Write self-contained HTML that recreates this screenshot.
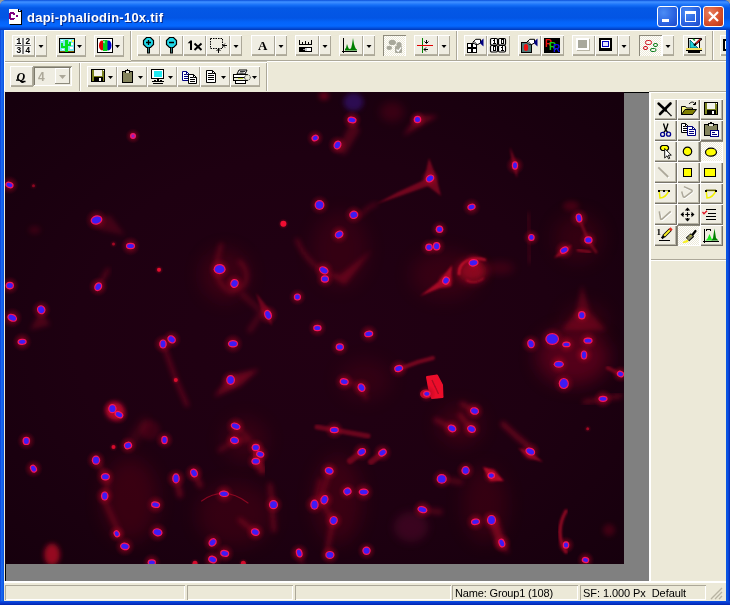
<!DOCTYPE html>
<html><head><meta charset="utf-8">
<style>
*{box-sizing:border-box;margin:0;padding:0}
html,body{width:730px;height:605px;overflow:hidden;background:#ECE9D8;font-family:"Liberation Sans",sans-serif;font-size:11px;color:#000}
.a{position:absolute}
#frame{will-change:transform}
#frame{left:0;top:0;width:730px;height:605px;background:linear-gradient(to right,#0A3AD6 0,#1560EA 1px,#1E70F2 2px,#0A55E2 3px,#0A55E2 4px,#0A55E2 726px,#0A55E2 727px,#0C4FE0 728px,#0838CC 729px,#0428B0 730px);border-radius:6px 6px 0 0;overflow:hidden}
#corners{left:0;top:0;width:730px;height:10px;background:linear-gradient(#9a9a88,#8aa0e0 5px)}
#title{left:0;top:0;width:730px;height:30px;border-radius:6px 6px 0 0;
 background:linear-gradient(#0040D0 0,#2F7FF8 1px,#3A8BFF 2.5px,#1670F8 5px,#0458E6 8px,#0355E4 18px,#0464FA 22px,#0568FF 26px,#0450DC 28px,#0038B8 30px)}
#ttext{left:27px;top:9.5px;color:#fff;font-weight:bold;font-size:13px;line-height:16px;white-space:nowrap;letter-spacing:.25px;text-shadow:1px 1px 0 #0A2A8A}
#client{left:4px;top:30px;width:722px;height:571px;background:#ECE9D8;overflow:hidden}
.cb{top:6px;width:21px;height:21px;border:1px solid #fff;border-radius:3px;background:radial-gradient(circle at 30% 30%,#4B8CF5 0,#2A62E0 60%,#1C49C8 100%)}
#bclose{background:radial-gradient(circle at 30% 30%,#E8805F 0,#D7502C 55%,#B83414 100%)}
.btn{position:absolute;height:22px;background:#EFEDE2;box-shadow:inset 1px 1px 0 #fff,inset -1px -1px 0 #ACA899,inset 0 -2px 0 #B5B1A0}
.btn svg,.tb svg{position:absolute;left:0;top:0}
.dd:after{content:"";position:absolute;right:3px;top:9px;border:3.5px solid transparent;border-top:4px solid #000;border-bottom:0}
.sunk{box-shadow:inset 1px 1px 0 #8d8a7c,inset -1px -1px 0 #fff;background:#F6F5EE}
.vsep{position:absolute;width:2px;border-left:1px solid #ACA899;border-right:1px solid #fff}
.hsep{position:absolute;height:2px;border-top:1px solid #ACA899;border-bottom:1px solid #fff}
.tb{position:absolute;width:23px;height:21px;background:#EFEDE2;box-shadow:inset 1px 1px 0 #fff,inset -1px -1px 0 #77746A,inset -2px -2px 0 #B8B5A5}
.tb.p{background:#F8F7F1;box-shadow:inset 1px 1px 0 #8d8a7c,inset -1px -1px 0 #fff}
#s1{letter-spacing:-.16px}#s2{letter-spacing:-.07px}
.sp{position:absolute;top:555px;height:15px;box-shadow:inset 1px 1px 0 #ACA899,inset -1px -1px 0 #fff;font-size:11px;line-height:17px;padding-left:3px;white-space:nowrap;overflow:hidden}
</style></head><body>
<svg width="0" height="0" style="position:absolute"><defs><pattern id="dith" width="2" height="2" patternUnits="userSpaceOnUse"><rect width="2" height="2" fill="#fff"/><rect width="1" height="1" fill="#ECE9D8"/><rect x="1" y="1" width="1" height="1" fill="#ECE9D8"/></pattern></defs></svg>
<div class="a" id="corners"></div>
<div class="a" id="frame">
<div class="a" id="title"></div>
<svg class="a" style="left:8px;top:9px" width="16" height="16"><g shape-rendering="crispEdges"><rect x="2" y="1" width="12" height="15" fill="#000"/><rect x="1" y="0" width="12" height="15" fill="#fff"/>
<path d="M10 0h3v3h-3z" fill="#000"/><rect x="11" y="1" width="1" height="1" fill="#fff"/><path d="M10 0L13 3V0z" fill="#0054E3"/>
<g transform="translate(-1 -1)"><path d="M3 4h4v1h1v1H6V5.8H4V6H3v4h1v.5h2V10h2v1H7v1H3v-1H2V5h1z" fill="#800080"/><rect x="2" y="5" width="2" height="6" fill="#800080"/><rect x="3" y="4" width="4" height="2" fill="#800080"/><rect x="3" y="10" width="4" height="2" fill="#800080"/><rect x="6" y="5" width="2" height="1.5" fill="#800080"/><rect x="6" y="9.5" width="2" height="1.5" fill="#800080"/>
<rect x="9" y="7" width="2" height="2" fill="#800080"/></g></g></svg>
<div class="a" id="ttext">dapi-phaliodin-10x.tif</div>
<div class="a cb" style="left:657px"><svg width="19" height="19"><rect x="4" y="12" width="7" height="3" fill="#fff"/></svg></div>
<div class="a cb" style="left:680px"><svg width="19" height="19"><rect x="4.5" y="5.5" width="10" height="9" fill="none" stroke="#fff"/><rect x="4" y="4" width="11" height="3" fill="#fff"/></svg></div>
<div class="a cb" id="bclose" style="left:703px"><svg width="19" height="19"><path d="M5 5L14 14M14 5L5 14" stroke="#fff" stroke-width="2.2"/></svg></div>
<div class="a" style="left:0;top:601px;width:730px;height:4px;background:linear-gradient(#0A50E0,#0838D0 50%,#0224A8)"></div>
<div class="a" id="client"></div><div class="a" id="content" style="left:0;top:0;width:726px;height:601px;overflow:hidden">


<div class="a" style="left:4px;top:30px;width:722px;height:1px;background:#fff"></div>
<div class="a" style="left:4px;top:61px;width:127px;height:1px;background:#ACA899"></div>
<div class="a" style="left:4px;top:62px;width:263px;height:1px;background:#fff"></div>
<div class="a" style="left:131px;top:60px;width:595px;height:1px;background:#ACA899"></div>
<div class="a" style="left:131px;top:61px;width:136px;height:1px;background:#C8C5B5"></div>
<div class="a" style="left:267px;top:61px;width:459px;height:1px;background:#fff"></div>
<div class="a" style="left:4px;top:30px;width:1px;height:61px;background:#fff"></div>
<div class="btn" style="left:12px;top:35px;width:23px;height:22px"><svg width="23" height="22"><g shape-rendering="crispEdges"><rect x="3" y="3" width="16" height="16" fill="#fff" opacity=".7"/><rect x="10" y="3" width="2" height="16" fill="#808080"/><rect x="3" y="10" width="16" height="1" fill="#808080"/></g>
<g font-family="Liberation Mono" font-weight="bold" font-size="8.5" fill="#000"><text x="4.2" y="9.3">1</text><text x="13.2" y="9.3">2</text><text x="4.2" y="18.3">3</text><text x="13.2" y="18.3">4</text></g></svg></div>
<div class="btn" style="left:35px;top:35px;width:12px;height:22px"><svg width="12" height="22"><path d="M3.5 10h5l-2.5 3z" fill="#000"/></svg></div>
<div class="btn" style="left:56px;top:35px;width:30px;height:22px"><svg width="30" height="22"><g shape-rendering="crispEdges"><rect x="3" y="3" width="16" height="15" fill="#000"/><rect x="4" y="4" width="14" height="12" fill="#80E8F0"/>
<rect x="4" y="16" width="14" height="1" fill="#806000"/>
<rect x="9" y="5" width="3" height="12" fill="#00E020"/><rect x="5" y="8" width="2" height="5" fill="#00E020"/><rect x="5" y="11" width="5" height="2" fill="#00E020"/><rect x="13" y="7" width="2" height="4" fill="#00E020"/><rect x="11" y="9" width="4" height="2" fill="#00E020"/>
<rect x="16" y="5" width="2" height="2" fill="#FFFF40"/><rect x="13" y="5" width="2" height="1" fill="#fff"/><rect x="15" y="8" width="2" height="2" fill="#fff"/><rect x="5" y="5" width="2" height="1" fill="#fff"/><rect x="14" y="12" width="3" height="2" fill="#fff"/><rect x="6" y="14" width="2" height="1" fill="#fff"/></g>
<path d="M21 10h5l-2.5 3z" fill="#000"/></svg></div>
<div class="btn" style="left:94px;top:35px;width:30px;height:22px"><svg width="30" height="22"><g shape-rendering="crispEdges"><rect x="3" y="3" width="16" height="15" fill="#000"/><rect x="4" y="4" width="14" height="13" fill="#fff"/></g>
<ellipse cx="8" cy="10.5" rx="3" ry="5" fill="#E00000"/><ellipse cx="14.5" cy="10.5" rx="3" ry="5" fill="#0000D0"/><rect x="9" y="5" width="4.5" height="11" fill="#00D020"/><path d="M9 7l1.5-1.5v3z" fill="#fff"/>
<path d="M21 10h5l-2.5 3z" fill="#000"/></svg></div>
<div class="vsep" style="left:130px;top:31px;height:29px"></div>
<div class="btn" style="left:137px;top:35px;width:23px;height:21px"><svg width="23" height="21"><path d="M9.5 2.5h4l3 3v4l-3 3h-4l-3-3v-4z" fill="#20D8E8" stroke="#000" stroke-width="1.2"/><path d="M9 7.5h5" stroke="#000" stroke-width="1.3"/><path d="M11.5 5v5" stroke="#000" stroke-width="1.3"/><rect x="10" y="12.5" width="3" height="6" fill="#000"/><rect x="11" y="12.5" width="1" height="5" fill="#407878"/></svg></div>
<div class="btn" style="left:160px;top:35px;width:23px;height:21px"><svg width="23" height="21"><path d="M9.5 2.5h4l3 3v4l-3 3h-4l-3-3v-4z" fill="#20D8E8" stroke="#000" stroke-width="1.2"/><path d="M9 7.5h5" stroke="#000" stroke-width="1.3"/><rect x="10" y="12.5" width="3" height="6" fill="#000"/><rect x="11" y="12.5" width="1" height="5" fill="#407878"/></svg></div>
<div class="btn" style="left:183px;top:35px;width:23px;height:21px"><svg width="23" height="21"><path d="M4.7 8.2L7.3 5.6H9V15H7V8.2z" fill="#000"/><path d="M11.5 8.5L18.5 15M18.5 8.5L11.5 15" stroke="#000" stroke-width="1.9"/></svg></div>
<div class="btn" style="left:206px;top:35px;width:24px;height:21px"><svg width="24" height="21"><rect x="4.5" y="3.5" width="12" height="10" fill="none" stroke="#000" stroke-width="1" stroke-dasharray="1.5 1"/>
<path d="M17 10.5h4M17 10.5l2-2M17 10.5l2 2M12.5 14v4M12.5 14l-2 2M12.5 14l2 2" stroke="#000" stroke-width="1" fill="none"/></svg></div>
<div class="btn" style="left:230px;top:35px;width:12px;height:21px"><svg width="12" height="21"><path d="M3.5 10h5l-2.5 3z" fill="#000"/></svg></div>
<div class="btn" style="left:251px;top:35px;width:24px;height:21px"><svg width="24" height="21"><text x="11.7" y="15" text-anchor="middle" font-family="Liberation Serif" font-size="13" font-weight="bold" fill="#000">A</text></svg></div>
<div class="btn" style="left:275px;top:35px;width:12px;height:21px"><svg width="12" height="21"><path d="M3.5 10h5l-2.5 3z" fill="#000"/></svg></div>
<div class="btn" style="left:295px;top:35px;width:24px;height:21px"><svg width="24" height="21"><g shape-rendering="crispEdges"><rect x="4" y="9" width="13" height="1" fill="#000"/><rect x="4" y="5" width="1" height="4" fill="#000"/><rect x="16" y="5" width="1" height="4" fill="#000"/><rect x="7" y="7" width="1" height="2" fill="#000"/><rect x="10" y="6" width="1" height="3" fill="#000"/><rect x="13" y="7" width="1" height="2" fill="#000"/>
<rect x="4" y="12" width="13" height="5" fill="#000"/><rect x="12" y="13" width="4" height="3" fill="#fff"/><rect x="10" y="13" width="2" height="3" fill="#c8c8c8"/><rect x="8" y="14" width="2" height="1" fill="#909090"/></g></svg></div>
<div class="btn" style="left:319px;top:35px;width:12px;height:21px"><svg width="12" height="21"><path d="M3.5 10h5l-2.5 3z" fill="#000"/></svg></div>
<div class="btn" style="left:339px;top:35px;width:24px;height:21px"><svg width="24" height="21"><g shape-rendering="crispEdges"><rect x="4" y="3" width="1" height="15" fill="#000"/><rect x="4" y="16" width="14" height="1" fill="#000"/><rect x="3" y="16" width="3" height="1" fill="#000"/></g>
<path d="M6 15.5V14l1-1 1-4 1 3 1 2 2-.5 1-4 1-6.5 1 6 1 3 1 2 1 .5V15.5z" fill="#008000"/></svg></div>
<div class="btn" style="left:363px;top:35px;width:12px;height:21px"><svg width="12" height="21"><path d="M3.5 10h5l-2.5 3z" fill="#000"/></svg></div>
<div class="btn sunk" style="left:383px;top:35px;width:23px;height:21px"><svg width="23" height="21"><rect x="1" y="1" width="21" height="20" fill="url(#dith)"/><ellipse cx="9.3" cy="7.4" rx="3.6" ry="2.6" fill="#A8A89C"/><ellipse cx="6.3" cy="12.8" rx="2.7" ry="2.1" fill="#A8A89C"/><ellipse cx="16" cy="9.5" rx="2.6" ry="2.6" fill="#A8A89C"/>
<rect x="12" y="11" width="7" height="7" fill="#A8A89C" rx="1"/><path d="M13.5 14.5l1.7 1.8 3-4" stroke="#fff" stroke-width="1.3" fill="none"/></svg></div>
<div class="btn" style="left:414px;top:35px;width:24px;height:21px"><svg width="24" height="21"><g shape-rendering="crispEdges"><rect x="8" y="3" width="1" height="15" fill="#008000"/><rect x="3" y="10" width="16" height="1" fill="#E00000"/></g>
<path d="M12.5 5v3M12.5 8.5l-2-2M12.5 8.5l2-2M10 14.5h4M10 14.5l2-2M10 14.5l2 2" stroke="#000" stroke-width="1" fill="none"/></svg></div>
<div class="btn" style="left:438px;top:35px;width:12px;height:21px"><svg width="12" height="21"><path d="M3.5 10h5l-2.5 3z" fill="#000"/></svg></div>
<div class="vsep" style="left:456px;top:31px;height:29px"></div>
<div class="btn" style="left:464px;top:35px;width:23px;height:21px"><svg width="23" height="21"><g shape-rendering="crispEdges" fill="#fff" stroke="#000"><rect x="3.5" y="8.5" width="4" height="4"/><rect x="8.5" y="8.5" width="4" height="4"/><rect x="3.5" y="13.5" width="4" height="4"/><rect x="8.5" y="13.5" width="4" height="4"/></g><path d="M8.8 7.2L11.8 4.3H16.5V8L13.8 9.5L10.8 9.2Z" fill="#fff" stroke="#000" stroke-width="1"/><path d="M9.8 6.2l2.6 2.6" stroke="#000" stroke-width=".9"/><path d="M16.2 6.5l3.3-3v8L16.2 8.5z" fill="#000080"/></svg></div>
<div class="btn" style="left:487px;top:35px;width:23px;height:21px"><svg width="23" height="21"><g fill="#fff" stroke="#000" stroke-width="1.2"><rect x="3.5" y="3.5" width="7" height="6.5" rx="1.2"/><rect x="11.5" y="3.5" width="7" height="6.5" rx="1.2"/><rect x="3.5" y="10.5" width="7" height="6.5" rx="1.2"/><rect x="11.5" y="10.5" width="7" height="6.5" rx="1.2"/></g>
<g shape-rendering="crispEdges"><rect x="7" y="4" width="1" height="4" fill="#000"/><rect x="6" y="5" width="1" height="1" fill="#000"/><rect x="6" y="8" width="3" height="1" fill="#000"/><rect x="14.5" y="4.5" width="2" height="4" fill="none" stroke="#000" stroke-width="1"/><rect x="6.5" y="11.5" width="2" height="4" fill="none" stroke="#000" stroke-width="1"/><rect x="15" y="11" width="1" height="4" fill="#000"/><rect x="14" y="12" width="1" height="1" fill="#000"/><rect x="14" y="15" width="3" height="1" fill="#000"/></g></svg></div>
<div class="btn" style="left:518px;top:35px;width:23px;height:21px"><svg width="23" height="21"><g shape-rendering="crispEdges"><rect x="3" y="7" width="11" height="11" fill="#000"/><rect x="4" y="8" width="9" height="9" fill="#507878"/></g><ellipse cx="8" cy="12.5" rx="2.2" ry="3.5" fill="#F01010"/><path d="M8.8 7.2L11.8 4.3H16.5V8L13.8 9.5L10.8 9.2Z" fill="#fff" stroke="#000" stroke-width="1"/><path d="M9.8 6.2l2.6 2.6" stroke="#000" stroke-width=".9"/><path d="M16.2 6.5l3.3-3v8L16.2 8.5z" fill="#000080"/></svg></div>
<div class="btn" style="left:541px;top:35px;width:23px;height:21px"><svg width="23" height="21"><rect x="3" y="3" width="16" height="15" fill="#000" shape-rendering="crispEdges"/><g font-family="Liberation Sans" font-weight="bold" font-size="10"><text x="4" y="12" fill="#F01010">R</text><text x="8" y="14.5" fill="#10D010">R</text><text x="12" y="17" fill="#1010F0">R</text></g></svg></div>
<div class="btn" style="left:572px;top:35px;width:23px;height:21px"><svg width="23" height="21"><g shape-rendering="crispEdges"><rect x="5" y="4" width="13" height="12" fill="#B8B5A5"/><rect x="4" y="3" width="13" height="12" fill="#fff"/><rect x="6" y="5" width="9" height="8" fill="#A8A89C"/></g></svg></div>
<div class="btn" style="left:595px;top:35px;width:23px;height:21px"><svg width="23" height="21"><g shape-rendering="crispEdges"><rect x="4" y="3" width="13" height="13" fill="#000"/><rect x="6" y="5" width="9" height="8" fill="#fff"/><rect x="7" y="6" width="7" height="6" fill="#0000C0"/><rect x="8" y="7" width="5" height="4" fill="#E0E0FF"/></g></svg></div>
<div class="btn" style="left:618px;top:35px;width:12px;height:21px"><svg width="12" height="21"><path d="M3.5 10h5l-2.5 3z" fill="#000"/></svg></div>
<div class="btn sunk" style="left:639px;top:35px;width:23px;height:21px"><svg width="23" height="21"><rect x="1" y="1" width="21" height="20" fill="url(#dith)"/><g fill="none" stroke-width="1"><rect x="6.5" y="5.5" width="6" height="4" rx="1.8" stroke="#D01020"/><rect x="4.5" y="11.5" width="4" height="3" rx="1.5" stroke="#D01020"/><rect x="14.5" y="8.5" width="4" height="3" rx="1.5" stroke="#108020"/><rect x="11.5" y="13.5" width="5.5" height="3" rx="1.5" stroke="#108020"/></g></svg></div>
<div class="btn" style="left:662px;top:35px;width:12px;height:21px"><svg width="12" height="21"><path d="M3.5 10h5l-2.5 3z" fill="#000"/></svg></div>
<div class="btn" style="left:683px;top:35px;width:23px;height:21px"><svg width="23" height="21"><g shape-rendering="crispEdges"><rect x="5" y="3" width="12" height="10" fill="#000"/><rect x="6" y="4" width="10" height="9" fill="#fff"/></g><path d="M7 5v8h8z" fill="#20D0D8" stroke="#005060" stroke-width=".8"/><path d="M10 4l2 1.5" stroke="#10A020" stroke-width="1.5"/>
<path d="M18.5 3.5L11 10.5" stroke="#000" stroke-width="2.2"/><path d="M17.5 4L13 8.5" stroke="#E02020" stroke-width="1.1"/><path d="M19 3.2l-2 .3 1.7 1.7z" fill="#000"/>
<g shape-rendering="crispEdges"><rect x="3" y="13" width="16" height="2" fill="#F0E060"/><rect x="3" y="15" width="16" height="1" fill="#000"/><rect x="5" y="16" width="12" height="2" fill="#000"/></g></svg></div>
<div class="vsep" style="left:712px;top:31px;height:29px"></div>
<div class="btn" style="left:720px;top:35px;width:23px;height:21px"><svg width="23" height="21"><g shape-rendering="crispEdges"><rect x="3" y="4" width="10" height="12" fill="#000"/><rect x="5" y="6" width="8" height="8" fill="#fff"/></g></svg></div>
<div class="btn" style="left:10px;top:66px;width:23px;height:21px"><svg width="23" height="21"><text x="6.5" y="14.6" font-family="Liberation Serif" font-size="12" font-weight="bold" font-style="italic" fill="#000">Q</text><path d="M6 14.2h3.5l2 1.3h4" stroke="#000" stroke-width="1.3" fill="none"/></svg></div>
<div class="a" style="left:33px;top:66px;width:39px;height:20px;box-shadow:inset 1px 1px 0 #A5A292,inset -1px -1px 0 #fff,inset 2px 2px 0 #7D7A6C;background:#EFEDE2"><svg width="39" height="20"><text x="5" y="15" font-family="Liberation Sans" font-size="12" font-weight="bold" fill="#ACA899">4</text>
<g shape-rendering="crispEdges"><rect x="22" y="2" width="15" height="16" fill="#EFEDE2"/><rect x="22" y="2" width="15" height="1" fill="#fff"/><rect x="22" y="2" width="1" height="16" fill="#fff"/><rect x="36" y="2" width="1" height="16" fill="#8d8a7c"/><rect x="22" y="17" width="15" height="1" fill="#8d8a7c"/></g><path d="M26 9h7l-3.5 4z" fill="#ACA899"/></svg></div>
<div class="vsep" style="left:79px;top:63px;height:28px"></div>
<div class="btn" style="left:87px;top:66px;width:30px;height:21px"><svg width="30" height="21"><g shape-rendering="crispEdges" transform="translate(4 3)"><rect x="0" y="0" width="14" height="13" fill="#000"/><rect x="1" y="1" width="12" height="11" fill="#7C8420"/><rect x="3" y="1" width="8" height="6" fill="#F4F4EC"/><rect x="3" y="8" width="9" height="4" fill="#000"/><rect x="8" y="9" width="2" height="3" fill="#fff"/><rect x="12" y="1" width="1" height="1" fill="#fff"/></g><path d="M21 10h5l-2.5 3z" fill="#000"/></svg></div>
<div class="btn" style="left:117px;top:66px;width:30px;height:21px"><svg width="30" height="21"><g shape-rendering="crispEdges"><rect x="5" y="5" width="11" height="12" fill="#000"/><rect x="6" y="6" width="9" height="10" fill="#84845C"/><rect x="8" y="4" width="5" height="3" fill="#000"/><rect x="9" y="5" width="3" height="2" fill="#E8E8D8"/><rect x="10" y="3" width="1" height="1" fill="#000"/></g><path d="M21 10h5l-2.5 3z" fill="#000"/></svg></div>
<div class="btn" style="left:147px;top:66px;width:30px;height:21px"><svg width="30" height="21"><g shape-rendering="crispEdges"><rect x="4" y="3" width="13" height="10" fill="#000"/><rect x="5" y="4" width="11" height="8" fill="#fff"/><rect x="7" y="5" width="8" height="6" fill="#20E8F0"/><rect x="10" y="13" width="2" height="3" fill="#000"/><rect x="5" y="15" width="12" height="1" fill="#000"/><rect x="6" y="17" width="10" height="1" fill="#000"/><rect x="7" y="14" width="2" height="1" fill="#000"/><rect x="13" y="14" width="2" height="1" fill="#000"/></g><path d="M21 10h5l-2.5 3z" fill="#000"/></svg></div>
<div class="btn" style="left:177px;top:66px;width:23px;height:21px"><svg width="23" height="21"><g transform="translate(5 5)"><path d="M.5 .5h4l3 3v6h-7z" fill="#fff" stroke="#000080" stroke-width="1"/><path d="M4.5 .5v3h3" fill="none" stroke="#000080" stroke-width="1"/><g shape-rendering="crispEdges"><rect x="2" y="3" width="2" height="1" fill="#000080"/><rect x="2" y="5" width="4" height="1" fill="#000080"/><rect x="2" y="7" width="4" height="1" fill="#000080"/></g></g><g transform="translate(11 8)"><path d="M.5 .5h5l3 3v6h-8z" fill="#fff" stroke="#000" stroke-width="1"/><path d="M5.5 .5v3h3" fill="none" stroke="#000" stroke-width="1"/><g shape-rendering="crispEdges"><rect x="2" y="3" width="3" height="1" fill="#000"/><rect x="2" y="5" width="5" height="1" fill="#000"/><rect x="2" y="7" width="5" height="1" fill="#000"/></g></g></svg></div>
<div class="btn" style="left:200px;top:66px;width:30px;height:21px"><svg width="30" height="21"><g transform="translate(6 4)"><path d="M.5 .5h6l3 3v9h-9z" fill="#fff" stroke="#000" stroke-width="1"/><path d="M6.5 .5v3h3" fill="none" stroke="#000" stroke-width="1"/><g shape-rendering="crispEdges"><rect x="2" y="3" width="4" height="1" fill="#000"/><rect x="2" y="5" width="6" height="1" fill="#000"/><rect x="2" y="7" width="6" height="1" fill="#000"/><rect x="2" y="9" width="6" height="1" fill="#000"/></g></g><path d="M21 10h5l-2.5 3z" fill="#000"/></svg></div>
<div class="btn" style="left:230px;top:66px;width:30px;height:21px"><svg width="30" height="21"><path d="M7 8l2-4h8l-2 4z" fill="#fff" stroke="#000"/><path d="M10 5.5h5M9.5 7h4" stroke="#000" stroke-width=".8"/>
<g shape-rendering="crispEdges"><rect x="3" y="8" width="15" height="7" fill="#000"/><rect x="4" y="9" width="13" height="2" fill="#fff"/><rect x="4" y="12" width="13" height="2" fill="#E8E8D8"/><rect x="8" y="12" width="5" height="1" fill="#C8E040"/><rect x="5" y="15" width="11" height="3" fill="#000"/><rect x="6" y="15" width="9" height="2" fill="#fff"/></g><circle cx="17.5" cy="11.5" r="2.8" fill="#E8E8D8" stroke="#000" stroke-width=".8" stroke-dasharray="1 .8"/>
<path d="M22 10h5l-2.5 3z" fill="#000"/></svg></div>
<div class="vsep" style="left:266px;top:63px;height:28px"></div>
<div class="a" style="left:5px;top:92px;width:644px;height:489px;background:#808080"></div>
<div class="a" style="left:5px;top:92px;width:644px;height:1px;background:#000"></div>
<div class="a" style="left:5px;top:92px;width:1px;height:489px;background:#000"></div>
<svg class="a" style="left:5px;top:92px" width="619" height="472" viewBox="5 92 619 472"><defs>
<radialGradient id="bg" cx="50%" cy="52%" r="70%"><stop offset="0" stop-color="#220013"/><stop offset=".55" stop-color="#1E0011"/><stop offset="1" stop-color="#16000D"/></radialGradient>
<radialGradient id="gl"><stop offset="0" stop-color="#D8082C" stop-opacity=".75"/><stop offset=".45" stop-color="#B00624" stop-opacity=".4"/><stop offset="1" stop-color="#80001C" stop-opacity="0"/></radialGradient>
<radialGradient id="hz"><stop offset="0" stop-color="#fff" stop-opacity="1"/><stop offset=".6" stop-color="#fff" stop-opacity=".7"/><stop offset="1" stop-color="#fff" stop-opacity="0"/></radialGradient>
<filter id="b0" x="-20%" y="-20%" width="140%" height="140%"><feGaussianBlur stdDeviation=".5"/></filter>
<filter id="b1" x="-30%" y="-30%" width="160%" height="160%"><feGaussianBlur stdDeviation="1.3"/></filter>
<filter id="b2" x="-40%" y="-40%" width="180%" height="180%"><feGaussianBlur stdDeviation="2.5"/></filter>
<filter id="b3" x="-50%" y="-50%" width="200%" height="200%"><feGaussianBlur stdDeviation="4"/></filter>
<filter id="b4" x="-60%" y="-60%" width="220%" height="220%"><feGaussianBlur stdDeviation="9"/></filter>
<filter id="bn"><feGaussianBlur stdDeviation=".35"/></filter>
</defs>
<rect x="5" y="92" width="619" height="472" fill="url(#bg)"/>
<ellipse cx="472" cy="271" rx="15" ry="11.5" fill="#C00828" opacity="0.7" filter="url(#b3)"/>
<ellipse cx="500" cy="268" rx="14" ry="6" fill="#80001C" opacity="0.35" filter="url(#b3)"/>
<ellipse cx="115" cy="411" rx="9" ry="9" fill="#F00A38" opacity="0.8" filter="url(#b2)"/>
<ellipse cx="573" cy="357" rx="36" ry="28" fill="#8A0020" opacity="0.5" filter="url(#b4)"/>
<ellipse cx="52" cy="554.5" rx="8" ry="11" fill="#C00828" opacity="0.75" filter="url(#b2)"/>
<ellipse cx="411" cy="527" rx="17" ry="15" fill="#70103A" opacity="0.35" filter="url(#b3)"/>
<ellipse cx="353.5" cy="102" rx="10" ry="9" fill="#3A1888" opacity="0.55" filter="url(#b2)"/>
<ellipse cx="392" cy="112" rx="12" ry="10" fill="#80001C" opacity="0.3" filter="url(#b3)"/>
<ellipse cx="324" cy="96" rx="5" ry="4" fill="#B00020" opacity="0.5" filter="url(#b2)"/>
<ellipse cx="34.6" cy="230" rx="6" ry="4" fill="#80001C" opacity="0.3" filter="url(#b2)"/>
<ellipse cx="571" cy="206" rx="8" ry="5" fill="#80001C" opacity="0.4" filter="url(#b2)"/>
<ellipse cx="609" cy="530" rx="6" ry="6" fill="#80001C" opacity="0.4" filter="url(#b2)"/>
<ellipse cx="150" cy="430" rx="10" ry="10" fill="#80001C" opacity="0.3" filter="url(#b2)"/>
<ellipse cx="130" cy="500" rx="28" ry="42" fill="#7A0018" opacity="0.3" filter="url(#b4)"/>
<ellipse cx="235" cy="515" rx="38" ry="32" fill="#7A0018" opacity="0.25" filter="url(#b4)"/>
<ellipse cx="338" cy="500" rx="24" ry="44" fill="#7A0018" opacity="0.3" filter="url(#b4)"/>
<ellipse cx="485" cy="505" rx="22" ry="38" fill="#7A0018" opacity="0.25" filter="url(#b4)"/>
<ellipse cx="340" cy="250" rx="28" ry="38" fill="#7A0018" opacity="0.22" filter="url(#b4)"/>
<ellipse cx="445" cy="275" rx="34" ry="24" fill="#7A0018" opacity="0.25" filter="url(#b4)"/>
<ellipse cx="578" cy="238" rx="24" ry="24" fill="#7A0018" opacity="0.25" filter="url(#b4)"/>
<ellipse cx="225" cy="275" rx="24" ry="26" fill="#7A0018" opacity="0.3" filter="url(#b4)"/>
<ellipse cx="245" cy="440" rx="22" ry="22" fill="#7A0018" opacity="0.25" filter="url(#b4)"/>
<ellipse cx="365" cy="380" rx="26" ry="20" fill="#7A0018" opacity="0.2" filter="url(#b4)"/>
<ellipse cx="460" cy="425" rx="22" ry="20" fill="#7A0018" opacity="0.3" filter="url(#b4)"/>
<ellipse cx="585" cy="320" rx="22" ry="16" fill="#7A0018" opacity="0.25" filter="url(#b4)"/>
<path d="M403 136L417 115L438 116L422 125Z" fill="#D80A2E" opacity="0.35" filter="url(#b2)"/>
<path d="M429 158L436 176L441 196L428 186L400 196L376 204L398 192L424 180Z" fill="#D80A2E" opacity="0.45" filter="url(#b1)"/>
<path d="M376 204Q366 208 360 216" fill="none" stroke="#D80A2E" stroke-width="3" stroke-linecap="round" stroke-linejoin="round" opacity="0.3" filter="url(#b2)"/>
<path d="M510 147L518 165L517 178L512 166Z" fill="#D80A2E" opacity="0.4" filter="url(#b1)"/>
<path d="M221 245C215 265 212 280 230 292C250 290 250 270 240 262" fill="none" stroke="#D80A2E" stroke-width="5" stroke-linecap="round" stroke-linejoin="round" opacity="0.25" filter="url(#b2)"/>
<path d="M256 293L270 310L272 326L262 312Z" fill="#D80A2E" opacity="0.4" filter="url(#b1)"/>
<path d="M452 265L451 286L440 288L420 296L438 282Z" fill="#D80A2E" opacity="0.7" filter="url(#b1)"/>
<path d="M554 258L562 248L572 245L566 254Z" fill="#D80A2E" opacity="0.6" filter="url(#b1)"/>
<path d="M582 285L590 312L606 330L562 330L576 312Z" fill="#D80A2E" opacity="0.28" filter="url(#b2)"/>
<path d="M579 218L588 240L596 252" fill="none" stroke="#D80A2E" stroke-width="3" stroke-linecap="round" stroke-linejoin="round" opacity="0.4" filter="url(#b1)"/>
<path d="M578 250L590 252" fill="none" stroke="#D80A2E" stroke-width="3" stroke-linecap="round" stroke-linejoin="round" opacity="0.45" filter="url(#b1)"/>
<path d="M214 397L226 380L236 374L259 369L240 386Z" fill="#D80A2E" opacity="0.4" filter="url(#b2)"/>
<path d="M163 344L176 380L187 405" fill="none" stroke="#D80A2E" stroke-width="4" stroke-linecap="round" stroke-linejoin="round" opacity="0.35" filter="url(#b2)"/>
<path d="M399 369L418 362L433 358" fill="none" stroke="#D80A2E" stroke-width="4" stroke-linecap="round" stroke-linejoin="round" opacity="0.45" filter="url(#b1)"/>
<path d="M317 427L334 430L368 436" fill="none" stroke="#D80A2E" stroke-width="5" stroke-linecap="round" stroke-linejoin="round" opacity="0.4" filter="url(#b1)"/>
<path d="M503 424L516 436L527 445" fill="none" stroke="#D80A2E" stroke-width="5" stroke-linecap="round" stroke-linejoin="round" opacity="0.4" filter="url(#b2)"/>
<path d="M201.6 501Q224 485 248 503" fill="none" stroke="#D80A2E" stroke-width="1.2" stroke-linecap="round" stroke-linejoin="round" opacity="0.5" filter="url(#b0)"/>
<path d="M362 452L350 461M383 453L371 462" fill="none" stroke="#D80A2E" stroke-width="6" stroke-linecap="round" stroke-linejoin="round" opacity="0.4" filter="url(#b1)"/>
<path d="M518 448L530 451L543 462L528 458Z" fill="#D80A2E" opacity="0.55" filter="url(#b1)"/>
<path d="M483 467L494 470L504 481L490 481Z" fill="#D80A2E" opacity="0.8" filter="url(#b1)"/>
<path d="M486 514L498 520L509 553L498 548Z" fill="#D80A2E" opacity="0.45" filter="url(#b2)"/>
<path d="M566 511C558 525 558 540 566 552" fill="none" stroke="#D80A2E" stroke-width="3.5" stroke-linecap="round" stroke-linejoin="round" opacity="0.6" filter="url(#b1)"/>
<path d="M332 150L342 140L352 120L360 130L345 155Z" fill="#D80A2E" opacity="0.25" filter="url(#b2)"/>
<path d="M320 270L340 275L372 250L345 285Z" fill="#D80A2E" opacity="0.3" filter="url(#b2)"/>
<path d="M96 220L110 215L125 235L100 230Z" fill="#D80A2E" opacity="0.2" filter="url(#b2)"/>
<path d="M98 287L108 270" fill="none" stroke="#D80A2E" stroke-width="4" stroke-linecap="round" stroke-linejoin="round" opacity="0.3" filter="url(#b2)"/>
<path d="M41 310L30 330L50 325Z" fill="#D80A2E" opacity="0.25" filter="url(#b2)"/>
<path d="M330 470L320 500L333 520L326 556" fill="none" stroke="#D80A2E" stroke-width="5" stroke-linecap="round" stroke-linejoin="round" opacity="0.3" filter="url(#b2)"/>
<path d="M96 460L108 480L104 500L120 535" fill="none" stroke="#D80A2E" stroke-width="6" stroke-linecap="round" stroke-linejoin="round" opacity="0.25" filter="url(#b2)"/>
<path d="M176 478L180 495M194 473L200 485" fill="none" stroke="#D80A2E" stroke-width="6" stroke-linecap="round" stroke-linejoin="round" opacity="0.35" filter="url(#b2)"/>
<path d="M255 532L240 520M273 505L270 485L274 530" fill="none" stroke="#D80A2E" stroke-width="5" stroke-linecap="round" stroke-linejoin="round" opacity="0.3" filter="url(#b2)"/>
<path d="M314 505L320 480M299 553L302 563" fill="none" stroke="#D80A2E" stroke-width="4" stroke-linecap="round" stroke-linejoin="round" opacity="0.3" filter="url(#b2)"/>
<path d="M422 510L440 512M442 479L460 482" fill="none" stroke="#D80A2E" stroke-width="6" stroke-linecap="round" stroke-linejoin="round" opacity="0.25" filter="url(#b2)"/>
<path d="M452 428L436 420M471 429L460 415M474 411L462 404" fill="none" stroke="#D80A2E" stroke-width="5" stroke-linecap="round" stroke-linejoin="round" opacity="0.35" filter="url(#b2)"/>
<path d="M603 399L585 402L620 396" fill="none" stroke="#D80A2E" stroke-width="5" stroke-linecap="round" stroke-linejoin="round" opacity="0.3" filter="url(#b2)"/>
<path d="M620 374L608 368" fill="none" stroke="#D80A2E" stroke-width="4" stroke-linecap="round" stroke-linejoin="round" opacity="0.4" filter="url(#b1)"/>
<path d="M344 382L356 384M361 388L366 398" fill="none" stroke="#D80A2E" stroke-width="4" stroke-linecap="round" stroke-linejoin="round" opacity="0.3" filter="url(#b2)"/>
<path d="M256 448L258 462L262 470" fill="none" stroke="#D80A2E" stroke-width="8" stroke-linecap="round" stroke-linejoin="round" opacity="0.45" filter="url(#b2)"/>
<path d="M145 422L130 445" fill="none" stroke="#D80A2E" stroke-width="8" stroke-linecap="round" stroke-linejoin="round" opacity="0.2" filter="url(#b3)"/>
<path d="M236 426L250 440L234 441L220 450" fill="none" stroke="#D80A2E" stroke-width="5" stroke-linecap="round" stroke-linejoin="round" opacity="0.25" filter="url(#b2)"/>
<path d="M297 240Q303 256 318 268" fill="none" stroke="#D80A2E" stroke-width="4" stroke-linecap="round" stroke-linejoin="round" opacity="0.3" filter="url(#b2)"/>
<path d="M528 214L530 262" fill="none" stroke="#D80A2E" stroke-width="4" stroke-linecap="round" stroke-linejoin="round" opacity="0.18" filter="url(#b2)"/>
<path d="M243 295L262 312L250 330" fill="none" stroke="#D80A2E" stroke-width="6" stroke-linecap="round" stroke-linejoin="round" opacity="0.2" filter="url(#b2)"/>
<path d="M459 275C458 262 470 256 486 260" fill="none" stroke="#F01434" stroke-width="2.2" opacity=".8" filter="url(#b1)"/>
<path d="M466 280C472 284 480 282 484 278" fill="none" stroke="#E01030" stroke-width="1.6" opacity=".6" filter="url(#b1)"/>
<path d="M427 377L437 375.5L442 385L442.5 397L432 398L429 388Z" fill="#EC102C" stroke="#EC102C" stroke-width="2" stroke-linejoin="round" filter="url(#b0)"/>
<path d="M432 380L438.5 394" stroke="#A80A22" stroke-width="1.2" filter="url(#b0)"/>
<ellipse cx="426" cy="394" rx="6" ry="4.5" fill="#E0102C" opacity=".85" filter="url(#b0)"/>
<circle cx="133" cy="136" r="7.7" fill="url(#gl)"/>
<circle cx="9.5" cy="185" r="9.5" fill="url(#gl)"/>
<circle cx="315.2" cy="138" r="9.0" fill="url(#gl)"/>
<circle cx="319.5" cy="205" r="10.3" fill="url(#gl)"/>
<circle cx="352" cy="120" r="10.0" fill="url(#gl)"/>
<circle cx="337.5" cy="145" r="10.0" fill="url(#gl)"/>
<circle cx="417.5" cy="119.5" r="9.0" fill="url(#gl)"/>
<circle cx="430" cy="178.5" r="10.0" fill="url(#gl)"/>
<circle cx="471.5" cy="207" r="9.5" fill="url(#gl)"/>
<circle cx="515" cy="165.5" r="9.5" fill="url(#gl)"/>
<circle cx="96.5" cy="220" r="11.5" fill="url(#gl)"/>
<circle cx="130.5" cy="246" r="10.0" fill="url(#gl)"/>
<circle cx="9.8" cy="285.6" r="9.5" fill="url(#gl)"/>
<circle cx="98.2" cy="286.7" r="10.0" fill="url(#gl)"/>
<circle cx="41.2" cy="309.7" r="10.0" fill="url(#gl)"/>
<circle cx="12.2" cy="317.8" r="10.5" fill="url(#gl)"/>
<circle cx="219.6" cy="269.2" r="11.5" fill="url(#gl)"/>
<circle cx="234.5" cy="283.4" r="10.0" fill="url(#gl)"/>
<circle cx="297.4" cy="297" r="8.8" fill="url(#gl)"/>
<circle cx="268" cy="314.8" r="10.5" fill="url(#gl)"/>
<circle cx="317.4" cy="328" r="9.5" fill="url(#gl)"/>
<circle cx="353.8" cy="214.8" r="10.0" fill="url(#gl)"/>
<circle cx="339.1" cy="234.5" r="10.0" fill="url(#gl)"/>
<circle cx="439.5" cy="229.3" r="9.0" fill="url(#gl)"/>
<circle cx="429" cy="247.3" r="9.0" fill="url(#gl)"/>
<circle cx="436.6" cy="246.2" r="9.5" fill="url(#gl)"/>
<circle cx="323.8" cy="270.3" r="10.5" fill="url(#gl)"/>
<circle cx="324.9" cy="279" r="9.5" fill="url(#gl)"/>
<circle cx="446" cy="280.6" r="9.5" fill="url(#gl)"/>
<circle cx="473.5" cy="262.8" r="10.5" fill="url(#gl)"/>
<circle cx="579" cy="218" r="10.0" fill="url(#gl)"/>
<circle cx="531.4" cy="237.4" r="8.7" fill="url(#gl)"/>
<circle cx="588.4" cy="240" r="9.5" fill="url(#gl)"/>
<circle cx="564.2" cy="250.1" r="10.0" fill="url(#gl)"/>
<circle cx="581.8" cy="315.2" r="9.5" fill="url(#gl)"/>
<circle cx="22.1" cy="341.8" r="10.0" fill="url(#gl)"/>
<circle cx="163" cy="344" r="10.0" fill="url(#gl)"/>
<circle cx="171.6" cy="339.4" r="10.0" fill="url(#gl)"/>
<circle cx="233" cy="343.8" r="10.5" fill="url(#gl)"/>
<circle cx="230.6" cy="380" r="10.3" fill="url(#gl)"/>
<circle cx="112.4" cy="408.7" r="10.0" fill="url(#gl)"/>
<circle cx="119" cy="414.6" r="10.0" fill="url(#gl)"/>
<circle cx="26.3" cy="440.9" r="9.5" fill="url(#gl)"/>
<circle cx="128" cy="445.5" r="9.5" fill="url(#gl)"/>
<circle cx="164.5" cy="440" r="9.5" fill="url(#gl)"/>
<circle cx="235.6" cy="426.2" r="10.5" fill="url(#gl)"/>
<circle cx="234.5" cy="440.4" r="10.0" fill="url(#gl)"/>
<circle cx="255.8" cy="447.5" r="9.5" fill="url(#gl)"/>
<circle cx="368.7" cy="333.9" r="10.0" fill="url(#gl)"/>
<circle cx="339.8" cy="347" r="9.5" fill="url(#gl)"/>
<circle cx="398.7" cy="368.5" r="10.0" fill="url(#gl)"/>
<circle cx="344.2" cy="381.7" r="10.0" fill="url(#gl)"/>
<circle cx="361.5" cy="387.6" r="10.0" fill="url(#gl)"/>
<circle cx="426.8" cy="393.8" r="9.0" fill="url(#gl)"/>
<circle cx="452" cy="428.4" r="10.0" fill="url(#gl)"/>
<circle cx="471.5" cy="429" r="10.0" fill="url(#gl)"/>
<circle cx="474.5" cy="411" r="10.0" fill="url(#gl)"/>
<circle cx="334.3" cy="430" r="10.0" fill="url(#gl)"/>
<circle cx="531" cy="343.8" r="10.0" fill="url(#gl)"/>
<circle cx="552.2" cy="339" r="12.5" fill="url(#gl)"/>
<circle cx="566.4" cy="344.4" r="9.5" fill="url(#gl)"/>
<circle cx="588" cy="340.7" r="10.0" fill="url(#gl)"/>
<circle cx="584" cy="355" r="10.0" fill="url(#gl)"/>
<circle cx="558.8" cy="364.2" r="10.5" fill="url(#gl)"/>
<circle cx="563.8" cy="383.5" r="11.0" fill="url(#gl)"/>
<circle cx="620.5" cy="374" r="9.0" fill="url(#gl)"/>
<circle cx="603" cy="398.8" r="10.0" fill="url(#gl)"/>
<circle cx="96" cy="460.2" r="10.0" fill="url(#gl)"/>
<circle cx="33.5" cy="468.6" r="9.5" fill="url(#gl)"/>
<circle cx="105.4" cy="476.7" r="10.0" fill="url(#gl)"/>
<circle cx="104.7" cy="496" r="10.0" fill="url(#gl)"/>
<circle cx="155.6" cy="504.7" r="10.0" fill="url(#gl)"/>
<circle cx="157.5" cy="532.3" r="10.5" fill="url(#gl)"/>
<circle cx="116.8" cy="533.7" r="9.0" fill="url(#gl)"/>
<circle cx="124.9" cy="546.4" r="10.3" fill="url(#gl)"/>
<circle cx="151.8" cy="562.5" r="9.5" fill="url(#gl)"/>
<circle cx="260.2" cy="454.3" r="9.5" fill="url(#gl)"/>
<circle cx="255.8" cy="461.3" r="9.7" fill="url(#gl)"/>
<circle cx="194" cy="473" r="10.0" fill="url(#gl)"/>
<circle cx="176" cy="478.4" r="10.5" fill="url(#gl)"/>
<circle cx="224" cy="493.8" r="10.5" fill="url(#gl)"/>
<circle cx="273.5" cy="504.7" r="10.0" fill="url(#gl)"/>
<circle cx="314.5" cy="504.7" r="10.5" fill="url(#gl)"/>
<circle cx="255.3" cy="532.1" r="10.0" fill="url(#gl)"/>
<circle cx="212.6" cy="542.4" r="10.0" fill="url(#gl)"/>
<circle cx="224.7" cy="553.4" r="10.0" fill="url(#gl)"/>
<circle cx="212.6" cy="559.5" r="10.0" fill="url(#gl)"/>
<circle cx="299.2" cy="553" r="10.0" fill="url(#gl)"/>
<circle cx="361.7" cy="451.9" r="10.0" fill="url(#gl)"/>
<circle cx="382.5" cy="452.6" r="10.0" fill="url(#gl)"/>
<circle cx="329.2" cy="470.8" r="10.0" fill="url(#gl)"/>
<circle cx="347.4" cy="491.4" r="9.5" fill="url(#gl)"/>
<circle cx="363.7" cy="492" r="10.5" fill="url(#gl)"/>
<circle cx="324.4" cy="499.7" r="10.3" fill="url(#gl)"/>
<circle cx="333.6" cy="520.5" r="10.0" fill="url(#gl)"/>
<circle cx="329.9" cy="554.9" r="10.0" fill="url(#gl)"/>
<circle cx="366.5" cy="550.8" r="9.5" fill="url(#gl)"/>
<circle cx="441.7" cy="478.9" r="10.5" fill="url(#gl)"/>
<circle cx="465.6" cy="470.5" r="9.7" fill="url(#gl)"/>
<circle cx="422.4" cy="509.6" r="10.5" fill="url(#gl)"/>
<circle cx="475.5" cy="521.8" r="10.0" fill="url(#gl)"/>
<circle cx="530.3" cy="451.5" r="10.5" fill="url(#gl)"/>
<circle cx="491.3" cy="475.6" r="9.0" fill="url(#gl)"/>
<circle cx="491.5" cy="520" r="10.5" fill="url(#gl)"/>
<circle cx="501.8" cy="543" r="10.0" fill="url(#gl)"/>
<circle cx="566" cy="545" r="9.0" fill="url(#gl)"/>
<circle cx="585.5" cy="560" r="9.0" fill="url(#gl)"/>
<circle cx="159" cy="269.8" r="4.5" fill="url(#gl)" opacity="0.9"/><circle cx="159" cy="269.8" r="2" fill="#F01030" opacity="0.9" filter="url(#bn)"/>
<circle cx="283.4" cy="223.8" r="5.5" fill="url(#gl)" opacity="1"/><circle cx="283.4" cy="223.8" r="3" fill="#F01030" opacity="1" filter="url(#bn)"/>
<circle cx="175.8" cy="380" r="4.5" fill="url(#gl)" opacity="0.8"/><circle cx="175.8" cy="380" r="2" fill="#F01030" opacity="0.8" filter="url(#bn)"/>
<circle cx="113.5" cy="447" r="4.5" fill="url(#gl)" opacity="0.8"/><circle cx="113.5" cy="447" r="2" fill="#F01030" opacity="0.8" filter="url(#bn)"/>
<circle cx="195" cy="563.3" r="5.0" fill="url(#gl)" opacity="0.8"/><circle cx="195" cy="563.3" r="2.5" fill="#F01030" opacity="0.8" filter="url(#bn)"/>
<circle cx="243.3" cy="563.3" r="5.0" fill="url(#gl)" opacity="0.8"/><circle cx="243.3" cy="563.3" r="2.5" fill="#F01030" opacity="0.8" filter="url(#bn)"/>
<circle cx="113.5" cy="244" r="4.0" fill="url(#gl)" opacity="0.5"/><circle cx="113.5" cy="244" r="1.5" fill="#F01030" opacity="0.5" filter="url(#bn)"/>
<circle cx="33.5" cy="185.8" r="4.0" fill="url(#gl)" opacity="0.4"/><circle cx="33.5" cy="185.8" r="1.5" fill="#F01030" opacity="0.4" filter="url(#bn)"/>
<circle cx="587.7" cy="428.8" r="4.0" fill="url(#gl)" opacity="0.5"/><circle cx="587.7" cy="428.8" r="1.5" fill="#F01030" opacity="0.5" filter="url(#bn)"/>
<g filter="url(#bn)">
<circle cx="133" cy="136" r="3" fill="#F0146A"/><circle cx="133" cy="136" r="1.5" fill="#9020C0"/>
<ellipse cx="9.5" cy="185" rx="4.2" ry="3.1" fill="#F4145C" transform="rotate(20 9.5 185)"/><ellipse cx="9.5" cy="185" rx="3.0" ry="1.9" fill="#3C1CF4" transform="rotate(20 9.5 185)"/>
<ellipse cx="315.2" cy="138" rx="3.8" ry="3.3" fill="#F4145C" transform="rotate(-30 315.2 138)"/><ellipse cx="315.2" cy="138" rx="2.5" ry="2.1" fill="#3C1CF4" transform="rotate(-30 315.2 138)"/>
<ellipse cx="319.5" cy="205" rx="4.9" ry="4.9" fill="#F4145C" transform="rotate(0 319.5 205)"/><ellipse cx="319.5" cy="205" rx="3.7" ry="3.7" fill="#3C1CF4" transform="rotate(0 319.5 205)"/>
<ellipse cx="352" cy="120" rx="4.6" ry="3.3" fill="#F4145C" transform="rotate(10 352 120)"/><ellipse cx="352" cy="120" rx="3.4" ry="2.1" fill="#3C1CF4" transform="rotate(10 352 120)"/>
<ellipse cx="337.5" cy="145" rx="3.8" ry="4.6" fill="#F4145C" transform="rotate(30 337.5 145)"/><ellipse cx="337.5" cy="145" rx="2.5" ry="3.4" fill="#3C1CF4" transform="rotate(30 337.5 145)"/>
<ellipse cx="417.5" cy="119.5" rx="3.8" ry="3.8" fill="#F4145C" transform="rotate(0 417.5 119.5)"/><ellipse cx="417.5" cy="119.5" rx="2.5" ry="2.5" fill="#3C1CF4" transform="rotate(0 417.5 119.5)"/>
<ellipse cx="430" cy="178.5" rx="4.6" ry="3.8" fill="#F4145C" transform="rotate(-35 430 178.5)"/><ellipse cx="430" cy="178.5" rx="3.4" ry="2.5" fill="#3C1CF4" transform="rotate(-35 430 178.5)"/>
<ellipse cx="471.5" cy="207" rx="4.2" ry="3.3" fill="#F4145C" transform="rotate(-20 471.5 207)"/><ellipse cx="471.5" cy="207" rx="3.0" ry="2.1" fill="#3C1CF4" transform="rotate(-20 471.5 207)"/>
<ellipse cx="515" cy="165.5" rx="3.1" ry="4.2" fill="#F4145C" transform="rotate(0 515 165.5)"/><ellipse cx="515" cy="165.5" rx="1.9" ry="3.0" fill="#3C1CF4" transform="rotate(0 515 165.5)"/>
<ellipse cx="96.5" cy="220" rx="6.0" ry="4.6" fill="#F4145C" transform="rotate(-15 96.5 220)"/><ellipse cx="96.5" cy="220" rx="4.8" ry="3.4" fill="#3C1CF4" transform="rotate(-15 96.5 220)"/>
<ellipse cx="130.5" cy="246" rx="4.6" ry="3.3" fill="#F4145C" transform="rotate(0 130.5 246)"/><ellipse cx="130.5" cy="246" rx="3.4" ry="2.1" fill="#3C1CF4" transform="rotate(0 130.5 246)"/>
<ellipse cx="9.8" cy="285.6" rx="4.2" ry="3.8" fill="#F4145C" transform="rotate(0 9.8 285.6)"/><ellipse cx="9.8" cy="285.6" rx="3.0" ry="2.5" fill="#3C1CF4" transform="rotate(0 9.8 285.6)"/>
<ellipse cx="98.2" cy="286.7" rx="3.8" ry="4.6" fill="#F4145C" transform="rotate(30 98.2 286.7)"/><ellipse cx="98.2" cy="286.7" rx="2.5" ry="3.4" fill="#3C1CF4" transform="rotate(30 98.2 286.7)"/>
<ellipse cx="41.2" cy="309.7" rx="4.2" ry="4.6" fill="#F4145C" transform="rotate(-30 41.2 309.7)"/><ellipse cx="41.2" cy="309.7" rx="3.0" ry="3.4" fill="#3C1CF4" transform="rotate(-30 41.2 309.7)"/>
<ellipse cx="12.2" cy="317.8" rx="5.1" ry="3.8" fill="#F4145C" transform="rotate(25 12.2 317.8)"/><ellipse cx="12.2" cy="317.8" rx="3.9" ry="2.5" fill="#3C1CF4" transform="rotate(25 12.2 317.8)"/>
<ellipse cx="219.6" cy="269.2" rx="6.0" ry="5.1" fill="#F4145C" transform="rotate(0 219.6 269.2)"/><ellipse cx="219.6" cy="269.2" rx="4.8" ry="3.9" fill="#3C1CF4" transform="rotate(0 219.6 269.2)"/>
<ellipse cx="234.5" cy="283.4" rx="4.2" ry="4.6" fill="#F4145C" transform="rotate(30 234.5 283.4)"/><ellipse cx="234.5" cy="283.4" rx="3.0" ry="3.4" fill="#3C1CF4" transform="rotate(30 234.5 283.4)"/>
<ellipse cx="297.4" cy="297" rx="3.6" ry="3.6" fill="#F4145C" transform="rotate(0 297.4 297)"/><ellipse cx="297.4" cy="297" rx="2.4" ry="2.4" fill="#3C1CF4" transform="rotate(0 297.4 297)"/>
<ellipse cx="268" cy="314.8" rx="3.8" ry="5.1" fill="#F4145C" transform="rotate(-20 268 314.8)"/><ellipse cx="268" cy="314.8" rx="2.5" ry="3.9" fill="#3C1CF4" transform="rotate(-20 268 314.8)"/>
<ellipse cx="317.4" cy="328" rx="4.2" ry="3.3" fill="#F4145C" transform="rotate(0 317.4 328)"/><ellipse cx="317.4" cy="328" rx="3.0" ry="2.1" fill="#3C1CF4" transform="rotate(0 317.4 328)"/>
<ellipse cx="353.8" cy="214.8" rx="4.6" ry="4.2" fill="#F4145C" transform="rotate(-20 353.8 214.8)"/><ellipse cx="353.8" cy="214.8" rx="3.4" ry="3.0" fill="#3C1CF4" transform="rotate(-20 353.8 214.8)"/>
<ellipse cx="339.1" cy="234.5" rx="4.6" ry="3.8" fill="#F4145C" transform="rotate(-30 339.1 234.5)"/><ellipse cx="339.1" cy="234.5" rx="3.4" ry="2.5" fill="#3C1CF4" transform="rotate(-30 339.1 234.5)"/>
<ellipse cx="439.5" cy="229.3" rx="3.8" ry="3.8" fill="#F4145C" transform="rotate(0 439.5 229.3)"/><ellipse cx="439.5" cy="229.3" rx="2.5" ry="2.5" fill="#3C1CF4" transform="rotate(0 439.5 229.3)"/>
<ellipse cx="429" cy="247.3" rx="3.8" ry="3.8" fill="#F4145C" transform="rotate(0 429 247.3)"/><ellipse cx="429" cy="247.3" rx="2.5" ry="2.5" fill="#3C1CF4" transform="rotate(0 429 247.3)"/>
<ellipse cx="436.6" cy="246.2" rx="3.8" ry="4.2" fill="#F4145C" transform="rotate(0 436.6 246.2)"/><ellipse cx="436.6" cy="246.2" rx="2.5" ry="3.0" fill="#3C1CF4" transform="rotate(0 436.6 246.2)"/>
<ellipse cx="323.8" cy="270.3" rx="5.1" ry="3.8" fill="#F4145C" transform="rotate(30 323.8 270.3)"/><ellipse cx="323.8" cy="270.3" rx="3.9" ry="2.5" fill="#3C1CF4" transform="rotate(30 323.8 270.3)"/>
<ellipse cx="324.9" cy="279" rx="4.2" ry="3.8" fill="#F4145C" transform="rotate(0 324.9 279)"/><ellipse cx="324.9" cy="279" rx="3.0" ry="2.5" fill="#3C1CF4" transform="rotate(0 324.9 279)"/>
<ellipse cx="446" cy="280.6" rx="3.8" ry="4.2" fill="#F4145C" transform="rotate(30 446 280.6)"/><ellipse cx="446" cy="280.6" rx="2.5" ry="3.0" fill="#3C1CF4" transform="rotate(30 446 280.6)"/>
<ellipse cx="473.5" cy="262.8" rx="5.1" ry="3.8" fill="#F4145C" transform="rotate(-10 473.5 262.8)"/><ellipse cx="473.5" cy="262.8" rx="3.9" ry="2.5" fill="#3C1CF4" transform="rotate(-10 473.5 262.8)"/>
<ellipse cx="579" cy="218" rx="3.3" ry="4.6" fill="#F4145C" transform="rotate(-10 579 218)"/><ellipse cx="579" cy="218" rx="2.1" ry="3.4" fill="#3C1CF4" transform="rotate(-10 579 218)"/>
<ellipse cx="531.4" cy="237.4" rx="3.3" ry="3.5" fill="#F4145C" transform="rotate(0 531.4 237.4)"/><ellipse cx="531.4" cy="237.4" rx="2.1" ry="2.3" fill="#3C1CF4" transform="rotate(0 531.4 237.4)"/>
<ellipse cx="588.4" cy="240" rx="4.2" ry="3.8" fill="#F4145C" transform="rotate(0 588.4 240)"/><ellipse cx="588.4" cy="240" rx="3.0" ry="2.5" fill="#3C1CF4" transform="rotate(0 588.4 240)"/>
<ellipse cx="564.2" cy="250.1" rx="4.6" ry="3.3" fill="#F4145C" transform="rotate(-30 564.2 250.1)"/><ellipse cx="564.2" cy="250.1" rx="3.4" ry="2.1" fill="#3C1CF4" transform="rotate(-30 564.2 250.1)"/>
<ellipse cx="581.8" cy="315.2" rx="3.8" ry="4.2" fill="#F4145C" transform="rotate(0 581.8 315.2)"/><ellipse cx="581.8" cy="315.2" rx="2.5" ry="3.0" fill="#3C1CF4" transform="rotate(0 581.8 315.2)"/>
<ellipse cx="22.1" cy="341.8" rx="4.6" ry="3.1" fill="#F4145C" transform="rotate(-5 22.1 341.8)"/><ellipse cx="22.1" cy="341.8" rx="3.4" ry="1.9" fill="#3C1CF4" transform="rotate(-5 22.1 341.8)"/>
<ellipse cx="163" cy="344" rx="3.8" ry="4.6" fill="#F4145C" transform="rotate(0 163 344)"/><ellipse cx="163" cy="344" rx="2.5" ry="3.4" fill="#3C1CF4" transform="rotate(0 163 344)"/>
<ellipse cx="171.6" cy="339.4" rx="4.6" ry="3.8" fill="#F4145C" transform="rotate(40 171.6 339.4)"/><ellipse cx="171.6" cy="339.4" rx="3.4" ry="2.5" fill="#3C1CF4" transform="rotate(40 171.6 339.4)"/>
<ellipse cx="233" cy="343.8" rx="5.1" ry="3.8" fill="#F4145C" transform="rotate(0 233 343.8)"/><ellipse cx="233" cy="343.8" rx="3.9" ry="2.5" fill="#3C1CF4" transform="rotate(0 233 343.8)"/>
<ellipse cx="230.6" cy="380" rx="4.4" ry="4.9" fill="#F4145C" transform="rotate(0 230.6 380)"/><ellipse cx="230.6" cy="380" rx="3.2" ry="3.7" fill="#3C1CF4" transform="rotate(0 230.6 380)"/>
<ellipse cx="112.4" cy="408.7" rx="4.2" ry="4.6" fill="#F4145C" transform="rotate(0 112.4 408.7)"/><ellipse cx="112.4" cy="408.7" rx="3.0" ry="3.4" fill="#3C1CF4" transform="rotate(0 112.4 408.7)"/>
<ellipse cx="119" cy="414.6" rx="4.6" ry="3.3" fill="#F4145C" transform="rotate(30 119 414.6)"/><ellipse cx="119" cy="414.6" rx="3.4" ry="2.1" fill="#3C1CF4" transform="rotate(30 119 414.6)"/>
<ellipse cx="26.3" cy="440.9" rx="3.8" ry="4.2" fill="#F4145C" transform="rotate(0 26.3 440.9)"/><ellipse cx="26.3" cy="440.9" rx="2.5" ry="3.0" fill="#3C1CF4" transform="rotate(0 26.3 440.9)"/>
<ellipse cx="128" cy="445.5" rx="4.2" ry="3.8" fill="#F4145C" transform="rotate(-20 128 445.5)"/><ellipse cx="128" cy="445.5" rx="3.0" ry="2.5" fill="#3C1CF4" transform="rotate(-20 128 445.5)"/>
<ellipse cx="164.5" cy="440" rx="3.3" ry="4.2" fill="#F4145C" transform="rotate(0 164.5 440)"/><ellipse cx="164.5" cy="440" rx="2.1" ry="3.0" fill="#3C1CF4" transform="rotate(0 164.5 440)"/>
<ellipse cx="235.6" cy="426.2" rx="5.1" ry="3.5" fill="#F4145C" transform="rotate(20 235.6 426.2)"/><ellipse cx="235.6" cy="426.2" rx="3.9" ry="2.3" fill="#3C1CF4" transform="rotate(20 235.6 426.2)"/>
<ellipse cx="234.5" cy="440.4" rx="4.6" ry="3.8" fill="#F4145C" transform="rotate(10 234.5 440.4)"/><ellipse cx="234.5" cy="440.4" rx="3.4" ry="2.5" fill="#3C1CF4" transform="rotate(10 234.5 440.4)"/>
<ellipse cx="255.8" cy="447.5" rx="4.2" ry="3.8" fill="#F4145C" transform="rotate(0 255.8 447.5)"/><ellipse cx="255.8" cy="447.5" rx="3.0" ry="2.5" fill="#3C1CF4" transform="rotate(0 255.8 447.5)"/>
<ellipse cx="368.7" cy="333.9" rx="4.6" ry="3.3" fill="#F4145C" transform="rotate(-10 368.7 333.9)"/><ellipse cx="368.7" cy="333.9" rx="3.4" ry="2.1" fill="#3C1CF4" transform="rotate(-10 368.7 333.9)"/>
<ellipse cx="339.8" cy="347" rx="4.2" ry="3.8" fill="#F4145C" transform="rotate(0 339.8 347)"/><ellipse cx="339.8" cy="347" rx="3.0" ry="2.5" fill="#3C1CF4" transform="rotate(0 339.8 347)"/>
<ellipse cx="398.7" cy="368.5" rx="4.6" ry="3.5" fill="#F4145C" transform="rotate(-15 398.7 368.5)"/><ellipse cx="398.7" cy="368.5" rx="3.4" ry="2.3" fill="#3C1CF4" transform="rotate(-15 398.7 368.5)"/>
<ellipse cx="344.2" cy="381.7" rx="4.6" ry="3.5" fill="#F4145C" transform="rotate(10 344.2 381.7)"/><ellipse cx="344.2" cy="381.7" rx="3.4" ry="2.3" fill="#3C1CF4" transform="rotate(10 344.2 381.7)"/>
<ellipse cx="361.5" cy="387.6" rx="3.8" ry="4.6" fill="#F4145C" transform="rotate(-30 361.5 387.6)"/><ellipse cx="361.5" cy="387.6" rx="2.5" ry="3.4" fill="#3C1CF4" transform="rotate(-30 361.5 387.6)"/>
<ellipse cx="426.8" cy="393.8" rx="3.8" ry="3.1" fill="#F4145C" transform="rotate(0 426.8 393.8)"/><ellipse cx="426.8" cy="393.8" rx="2.5" ry="1.9" fill="#3C1CF4" transform="rotate(0 426.8 393.8)"/>
<ellipse cx="452" cy="428.4" rx="4.6" ry="3.8" fill="#F4145C" transform="rotate(30 452 428.4)"/><ellipse cx="452" cy="428.4" rx="3.4" ry="2.5" fill="#3C1CF4" transform="rotate(30 452 428.4)"/>
<ellipse cx="471.5" cy="429" rx="4.6" ry="3.8" fill="#F4145C" transform="rotate(25 471.5 429)"/><ellipse cx="471.5" cy="429" rx="3.4" ry="2.5" fill="#3C1CF4" transform="rotate(25 471.5 429)"/>
<ellipse cx="474.5" cy="411" rx="4.6" ry="3.8" fill="#F4145C" transform="rotate(15 474.5 411)"/><ellipse cx="474.5" cy="411" rx="3.4" ry="2.5" fill="#3C1CF4" transform="rotate(15 474.5 411)"/>
<ellipse cx="334.3" cy="430" rx="4.6" ry="3.3" fill="#F4145C" transform="rotate(0 334.3 430)"/><ellipse cx="334.3" cy="430" rx="3.4" ry="2.1" fill="#3C1CF4" transform="rotate(0 334.3 430)"/>
<ellipse cx="531" cy="343.8" rx="3.8" ry="4.6" fill="#F4145C" transform="rotate(-15 531 343.8)"/><ellipse cx="531" cy="343.8" rx="2.5" ry="3.4" fill="#3C1CF4" transform="rotate(-15 531 343.8)"/>
<ellipse cx="552.2" cy="339" rx="6.9" ry="6.0" fill="#F4145C" transform="rotate(0 552.2 339)"/><ellipse cx="552.2" cy="339" rx="5.7" ry="4.8" fill="#3C1CF4" transform="rotate(0 552.2 339)"/>
<ellipse cx="566.4" cy="344.4" rx="4.2" ry="2.9" fill="#F4145C" transform="rotate(0 566.4 344.4)"/><ellipse cx="566.4" cy="344.4" rx="3.0" ry="1.6" fill="#3C1CF4" transform="rotate(0 566.4 344.4)"/>
<ellipse cx="588" cy="340.7" rx="4.6" ry="3.1" fill="#F4145C" transform="rotate(0 588 340.7)"/><ellipse cx="588" cy="340.7" rx="3.4" ry="1.9" fill="#3C1CF4" transform="rotate(0 588 340.7)"/>
<ellipse cx="584" cy="355" rx="3.3" ry="4.6" fill="#F4145C" transform="rotate(0 584 355)"/><ellipse cx="584" cy="355" rx="2.1" ry="3.4" fill="#3C1CF4" transform="rotate(0 584 355)"/>
<ellipse cx="558.8" cy="364.2" rx="5.1" ry="3.5" fill="#F4145C" transform="rotate(0 558.8 364.2)"/><ellipse cx="558.8" cy="364.2" rx="3.9" ry="2.3" fill="#3C1CF4" transform="rotate(0 558.8 364.2)"/>
<ellipse cx="563.8" cy="383.5" rx="5.1" ry="5.5" fill="#F4145C" transform="rotate(0 563.8 383.5)"/><ellipse cx="563.8" cy="383.5" rx="3.9" ry="4.4" fill="#3C1CF4" transform="rotate(0 563.8 383.5)"/>
<ellipse cx="620.5" cy="374" rx="3.8" ry="3.3" fill="#F4145C" transform="rotate(30 620.5 374)"/><ellipse cx="620.5" cy="374" rx="2.5" ry="2.1" fill="#3C1CF4" transform="rotate(30 620.5 374)"/>
<ellipse cx="603" cy="398.8" rx="4.6" ry="3.1" fill="#F4145C" transform="rotate(0 603 398.8)"/><ellipse cx="603" cy="398.8" rx="3.4" ry="1.9" fill="#3C1CF4" transform="rotate(0 603 398.8)"/>
<ellipse cx="96" cy="460.2" rx="4.2" ry="4.6" fill="#F4145C" transform="rotate(0 96 460.2)"/><ellipse cx="96" cy="460.2" rx="3.0" ry="3.4" fill="#3C1CF4" transform="rotate(0 96 460.2)"/>
<ellipse cx="33.5" cy="468.6" rx="3.3" ry="4.2" fill="#F4145C" transform="rotate(-30 33.5 468.6)"/><ellipse cx="33.5" cy="468.6" rx="2.1" ry="3.0" fill="#3C1CF4" transform="rotate(-30 33.5 468.6)"/>
<ellipse cx="105.4" cy="476.7" rx="4.6" ry="3.8" fill="#F4145C" transform="rotate(0 105.4 476.7)"/><ellipse cx="105.4" cy="476.7" rx="3.4" ry="2.5" fill="#3C1CF4" transform="rotate(0 105.4 476.7)"/>
<ellipse cx="104.7" cy="496" rx="3.8" ry="4.6" fill="#F4145C" transform="rotate(0 104.7 496)"/><ellipse cx="104.7" cy="496" rx="2.5" ry="3.4" fill="#3C1CF4" transform="rotate(0 104.7 496)"/>
<ellipse cx="155.6" cy="504.7" rx="4.6" ry="3.3" fill="#F4145C" transform="rotate(10 155.6 504.7)"/><ellipse cx="155.6" cy="504.7" rx="3.4" ry="2.1" fill="#3C1CF4" transform="rotate(10 155.6 504.7)"/>
<ellipse cx="157.5" cy="532.3" rx="5.1" ry="4.0" fill="#F4145C" transform="rotate(15 157.5 532.3)"/><ellipse cx="157.5" cy="532.3" rx="3.9" ry="2.8" fill="#3C1CF4" transform="rotate(15 157.5 532.3)"/>
<ellipse cx="116.8" cy="533.7" rx="3.1" ry="3.8" fill="#F4145C" transform="rotate(-30 116.8 533.7)"/><ellipse cx="116.8" cy="533.7" rx="1.9" ry="2.5" fill="#3C1CF4" transform="rotate(-30 116.8 533.7)"/>
<ellipse cx="124.9" cy="546.4" rx="4.9" ry="3.8" fill="#F4145C" transform="rotate(10 124.9 546.4)"/><ellipse cx="124.9" cy="546.4" rx="3.7" ry="2.5" fill="#3C1CF4" transform="rotate(10 124.9 546.4)"/>
<ellipse cx="151.8" cy="562.5" rx="4.2" ry="3.3" fill="#F4145C" transform="rotate(0 151.8 562.5)"/><ellipse cx="151.8" cy="562.5" rx="3.0" ry="2.1" fill="#3C1CF4" transform="rotate(0 151.8 562.5)"/>
<ellipse cx="260.2" cy="454.3" rx="4.2" ry="3.3" fill="#F4145C" transform="rotate(20 260.2 454.3)"/><ellipse cx="260.2" cy="454.3" rx="3.0" ry="2.1" fill="#3C1CF4" transform="rotate(20 260.2 454.3)"/>
<ellipse cx="255.8" cy="461.3" rx="4.4" ry="3.5" fill="#F4145C" transform="rotate(0 255.8 461.3)"/><ellipse cx="255.8" cy="461.3" rx="3.2" ry="2.3" fill="#3C1CF4" transform="rotate(0 255.8 461.3)"/>
<ellipse cx="194" cy="473" rx="3.8" ry="4.6" fill="#F4145C" transform="rotate(-30 194 473)"/><ellipse cx="194" cy="473" rx="2.5" ry="3.4" fill="#3C1CF4" transform="rotate(-30 194 473)"/>
<ellipse cx="176" cy="478.4" rx="3.8" ry="5.1" fill="#F4145C" transform="rotate(0 176 478.4)"/><ellipse cx="176" cy="478.4" rx="2.5" ry="3.9" fill="#3C1CF4" transform="rotate(0 176 478.4)"/>
<ellipse cx="224" cy="493.8" rx="5.1" ry="3.3" fill="#F4145C" transform="rotate(5 224 493.8)"/><ellipse cx="224" cy="493.8" rx="3.9" ry="2.1" fill="#3C1CF4" transform="rotate(5 224 493.8)"/>
<ellipse cx="273.5" cy="504.7" rx="4.6" ry="4.6" fill="#F4145C" transform="rotate(0 273.5 504.7)"/><ellipse cx="273.5" cy="504.7" rx="3.4" ry="3.4" fill="#3C1CF4" transform="rotate(0 273.5 504.7)"/>
<ellipse cx="314.5" cy="504.7" rx="4.2" ry="5.1" fill="#F4145C" transform="rotate(0 314.5 504.7)"/><ellipse cx="314.5" cy="504.7" rx="3.0" ry="3.9" fill="#3C1CF4" transform="rotate(0 314.5 504.7)"/>
<ellipse cx="255.3" cy="532.1" rx="4.6" ry="3.8" fill="#F4145C" transform="rotate(20 255.3 532.1)"/><ellipse cx="255.3" cy="532.1" rx="3.4" ry="2.5" fill="#3C1CF4" transform="rotate(20 255.3 532.1)"/>
<ellipse cx="212.6" cy="542.4" rx="3.8" ry="4.6" fill="#F4145C" transform="rotate(40 212.6 542.4)"/><ellipse cx="212.6" cy="542.4" rx="2.5" ry="3.4" fill="#3C1CF4" transform="rotate(40 212.6 542.4)"/>
<ellipse cx="224.7" cy="553.4" rx="4.6" ry="3.5" fill="#F4145C" transform="rotate(10 224.7 553.4)"/><ellipse cx="224.7" cy="553.4" rx="3.4" ry="2.3" fill="#3C1CF4" transform="rotate(10 224.7 553.4)"/>
<ellipse cx="212.6" cy="559.5" rx="4.6" ry="3.8" fill="#F4145C" transform="rotate(20 212.6 559.5)"/><ellipse cx="212.6" cy="559.5" rx="3.4" ry="2.5" fill="#3C1CF4" transform="rotate(20 212.6 559.5)"/>
<ellipse cx="299.2" cy="553" rx="3.3" ry="4.6" fill="#F4145C" transform="rotate(-15 299.2 553)"/><ellipse cx="299.2" cy="553" rx="2.1" ry="3.4" fill="#3C1CF4" transform="rotate(-15 299.2 553)"/>
<ellipse cx="361.7" cy="451.9" rx="4.6" ry="3.8" fill="#F4145C" transform="rotate(-30 361.7 451.9)"/><ellipse cx="361.7" cy="451.9" rx="3.4" ry="2.5" fill="#3C1CF4" transform="rotate(-30 361.7 451.9)"/>
<ellipse cx="382.5" cy="452.6" rx="4.6" ry="3.5" fill="#F4145C" transform="rotate(-35 382.5 452.6)"/><ellipse cx="382.5" cy="452.6" rx="3.4" ry="2.3" fill="#3C1CF4" transform="rotate(-35 382.5 452.6)"/>
<ellipse cx="329.2" cy="470.8" rx="4.6" ry="3.8" fill="#F4145C" transform="rotate(20 329.2 470.8)"/><ellipse cx="329.2" cy="470.8" rx="3.4" ry="2.5" fill="#3C1CF4" transform="rotate(20 329.2 470.8)"/>
<ellipse cx="347.4" cy="491.4" rx="4.2" ry="4.0" fill="#F4145C" transform="rotate(-30 347.4 491.4)"/><ellipse cx="347.4" cy="491.4" rx="3.0" ry="2.8" fill="#3C1CF4" transform="rotate(-30 347.4 491.4)"/>
<ellipse cx="363.7" cy="492" rx="5.1" ry="3.5" fill="#F4145C" transform="rotate(0 363.7 492)"/><ellipse cx="363.7" cy="492" rx="3.9" ry="2.3" fill="#3C1CF4" transform="rotate(0 363.7 492)"/>
<ellipse cx="324.4" cy="499.7" rx="4.0" ry="4.9" fill="#F4145C" transform="rotate(20 324.4 499.7)"/><ellipse cx="324.4" cy="499.7" rx="2.8" ry="3.7" fill="#3C1CF4" transform="rotate(20 324.4 499.7)"/>
<ellipse cx="333.6" cy="520.5" rx="4.2" ry="4.6" fill="#F4145C" transform="rotate(20 333.6 520.5)"/><ellipse cx="333.6" cy="520.5" rx="3.0" ry="3.4" fill="#3C1CF4" transform="rotate(20 333.6 520.5)"/>
<ellipse cx="329.9" cy="554.9" rx="4.6" ry="4.0" fill="#F4145C" transform="rotate(0 329.9 554.9)"/><ellipse cx="329.9" cy="554.9" rx="3.4" ry="2.8" fill="#3C1CF4" transform="rotate(0 329.9 554.9)"/>
<ellipse cx="366.5" cy="550.8" rx="4.2" ry="4.2" fill="#F4145C" transform="rotate(0 366.5 550.8)"/><ellipse cx="366.5" cy="550.8" rx="3.0" ry="3.0" fill="#3C1CF4" transform="rotate(0 366.5 550.8)"/>
<ellipse cx="441.7" cy="478.9" rx="5.1" ry="4.9" fill="#F4145C" transform="rotate(0 441.7 478.9)"/><ellipse cx="441.7" cy="478.9" rx="3.9" ry="3.7" fill="#3C1CF4" transform="rotate(0 441.7 478.9)"/>
<ellipse cx="465.6" cy="470.5" rx="4.2" ry="4.4" fill="#F4145C" transform="rotate(0 465.6 470.5)"/><ellipse cx="465.6" cy="470.5" rx="3.0" ry="3.2" fill="#3C1CF4" transform="rotate(0 465.6 470.5)"/>
<ellipse cx="422.4" cy="509.6" rx="5.1" ry="3.5" fill="#F4145C" transform="rotate(15 422.4 509.6)"/><ellipse cx="422.4" cy="509.6" rx="3.9" ry="2.3" fill="#3C1CF4" transform="rotate(15 422.4 509.6)"/>
<ellipse cx="475.5" cy="521.8" rx="4.6" ry="3.3" fill="#F4145C" transform="rotate(-10 475.5 521.8)"/><ellipse cx="475.5" cy="521.8" rx="3.4" ry="2.1" fill="#3C1CF4" transform="rotate(-10 475.5 521.8)"/>
<ellipse cx="530.3" cy="451.5" rx="5.1" ry="3.8" fill="#F4145C" transform="rotate(25 530.3 451.5)"/><ellipse cx="530.3" cy="451.5" rx="3.9" ry="2.5" fill="#3C1CF4" transform="rotate(25 530.3 451.5)"/>
<ellipse cx="491.3" cy="475.6" rx="3.8" ry="3.3" fill="#F4145C" transform="rotate(0 491.3 475.6)"/><ellipse cx="491.3" cy="475.6" rx="2.5" ry="2.1" fill="#3C1CF4" transform="rotate(0 491.3 475.6)"/>
<ellipse cx="491.5" cy="520" rx="4.6" ry="5.1" fill="#F4145C" transform="rotate(0 491.5 520)"/><ellipse cx="491.5" cy="520" rx="3.4" ry="3.9" fill="#3C1CF4" transform="rotate(0 491.5 520)"/>
<ellipse cx="501.8" cy="543" rx="3.3" ry="4.6" fill="#F4145C" transform="rotate(-20 501.8 543)"/><ellipse cx="501.8" cy="543" rx="2.1" ry="3.4" fill="#3C1CF4" transform="rotate(-20 501.8 543)"/>
<ellipse cx="566" cy="545" rx="3.3" ry="3.8" fill="#F4145C" transform="rotate(0 566 545)"/><ellipse cx="566" cy="545" rx="2.1" ry="2.5" fill="#3C1CF4" transform="rotate(0 566 545)"/>
<ellipse cx="585.5" cy="560" rx="3.8" ry="3.1" fill="#F4145C" transform="rotate(10 585.5 560)"/><ellipse cx="585.5" cy="560" rx="2.5" ry="1.9" fill="#3C1CF4" transform="rotate(10 585.5 560)"/>
</g></svg>
<div class="a" style="left:649px;top:91px;width:77px;height:1px;background:#ACA899"></div>
<div class="a" style="left:649px;top:92px;width:2px;height:490px;background:#fff"></div>
<div class="a" style="left:651px;top:92px;width:75px;height:1px;background:#fff"></div>
<div class="tb" style="left:654px;top:99px"><svg width="23" height="21"><path d="M4.5 4.5L12 11.5" stroke="#000" stroke-width="2.4" fill="none" stroke-linecap="round"/><path d="M12 11.5L16.5 16" stroke="#000" stroke-width="1.1"/><circle cx="17" cy="16.6" r=".8"/><path d="M16.5 4.5L6 15" stroke="#000" stroke-width="2.6" stroke-linecap="round"/></svg></div>
<div class="tb" style="left:677px;top:99px"><svg width="23" height="21"><path d="M4.5 15.5V7.5h4l1 1.5h6v6.5z" fill="#F8F880" stroke="#000"/><path d="M4.5 15.5l3.5-5h11.5l-4 5z" fill="#808000" stroke="#000"/><path d="M12 5c2-2.5 5-2.5 6 0M18.5 3v2.5h-2.5" stroke="#000" fill="none"/></svg></div>
<div class="tb" style="left:700px;top:99px"><svg width="23" height="21"><g shape-rendering="crispEdges" transform="translate(4 3)"><rect x="0" y="0" width="14" height="13" fill="#000"/><rect x="1" y="1" width="12" height="11" fill="#7C8420"/><rect x="3" y="1" width="8" height="6" fill="#F4F4EC"/><rect x="3" y="8" width="9" height="4" fill="#000"/><rect x="8" y="9" width="2" height="3" fill="#fff"/><rect x="12" y="1" width="1" height="1" fill="#fff"/></g></svg></div>
<div class="tb" style="left:654px;top:120px"><svg width="23" height="21"><path d="M9.5 3.5l2.2 7M14 3.5l-2.2 7M11.8 10l-2 2.5M11.8 10l2 2.5" stroke="#000" stroke-width="1.3" fill="none"/><circle cx="8.6" cy="14.4" r="2" fill="none" stroke="#000090" stroke-width="1.3"/><circle cx="14.6" cy="14.2" r="2" fill="none" stroke="#000090" stroke-width="1.3"/></svg></div>
<div class="tb" style="left:677px;top:120px"><svg width="23" height="21"><g transform="translate(4 3)"><path d="M.5 .5h4l3 3v6h-7z" fill="#fff" stroke="#000" stroke-width="1"/><path d="M4.5 .5v3h3" fill="none" stroke="#000" stroke-width="1"/><g shape-rendering="crispEdges"><rect x="2" y="3" width="2" height="1" fill="#000"/><rect x="2" y="5" width="4" height="1" fill="#000"/><rect x="2" y="7" width="4" height="1" fill="#000"/></g></g><g transform="translate(10 6)"><path d="M.5 .5h5l3 3v6h-8z" fill="#fff" stroke="#000080" stroke-width="1"/><path d="M5.5 .5v3h3" fill="none" stroke="#000080" stroke-width="1"/><g shape-rendering="crispEdges"><rect x="2" y="3" width="3" height="1" fill="#000080"/><rect x="2" y="5" width="5" height="1" fill="#000080"/><rect x="2" y="7" width="5" height="1" fill="#000080"/></g></g></svg></div>
<div class="tb" style="left:700px;top:120px"><svg width="23" height="21"><g shape-rendering="crispEdges"><rect x="4" y="4" width="14" height="12" fill="#000"/><rect x="5" y="5" width="12" height="10" fill="#84845C"/><rect x="8" y="3" width="6" height="3" fill="#000"/><rect x="9" y="4" width="4" height="2" fill="#E8E8D8"/><rect x="10" y="2" width="2" height="1" fill="#000"/></g><g shape-rendering="crispEdges"><rect x="10" y="10" width="9" height="7" fill="#000080"/><rect x="11" y="11" width="7" height="5" fill="#fff"/><rect x="12" y="12" width="3" height="1" fill="#000080"/><rect x="12" y="14" width="5" height="1" fill="#000080"/></g></svg></div>
<div class="tb" style="left:654px;top:141px"><svg width="23" height="21"><path d="M8 4.5h5l1.5 1.5v2l-1.5 1.5h-5l-1.5-1.5v-2z" fill="#FFFF00" stroke="#000" stroke-width="1.2"/><path d="M10.7 7.5v9.5l2.3-2.2 1.6 3 1.2-.6-1.5-3h3z" fill="#fff" stroke="#000" stroke-width=".9"/></svg></div>
<div class="tb" style="left:677px;top:141px"><svg width="23" height="21"><circle cx="10.5" cy="10.4" r="4.2" fill="#FFFF00" stroke="#000" stroke-width="1.2"/></svg></div>
<div class="tb p" style="left:700px;top:141px"><svg width="23" height="21"><rect x="1" y="1" width="21" height="19" fill="url(#dith)"/><ellipse cx="11" cy="11.2" rx="5.5" ry="4" fill="#FFFF00" stroke="#000" stroke-width="1.2"/></svg></div>
<div class="tb" style="left:654px;top:162px"><svg width="23" height="21"><path d="M5.3 6.4l9.9 9.6" stroke="#fff" stroke-width="1.6"/><path d="M4.3 5.4l9.9 9.6" stroke="#ACA899" stroke-width="1.8"/></svg></div>
<div class="tb" style="left:677px;top:162px"><svg width="23" height="21"><rect x="6.5" y="6.5" width="8" height="8" fill="#FFFF00" stroke="#000" stroke-width="1.2" shape-rendering="crispEdges"/></svg></div>
<div class="tb" style="left:700px;top:162px"><svg width="23" height="21"><rect x="4.5" y="6.5" width="11" height="8" fill="#FFFF00" stroke="#000" stroke-width="1.2" shape-rendering="crispEdges"/></svg></div>
<div class="tb" style="left:654px;top:183px"><svg width="23" height="21"><path d="M5 7.6h10" stroke="#606000" stroke-width=".8"/><path d="M5.2 7.6l.8 7.4c4 0 7-3 9-7.4" stroke="#F0F000" stroke-width="1.5" fill="none"/><g shape-rendering="crispEdges" fill="#000"><rect x="4" y="6.6" width="2" height="2"/><rect x="9" y="6.6" width="2" height="2"/><rect x="14" y="6.6" width="2" height="2"/></g></svg></div>
<div class="tb" style="left:677px;top:183px"><svg width="23" height="21"><path d="M7.6 4.6l8 3.6c.5.5.3 1.2-.2 1.6L8.5 15c-.8.4-1.5 0-1.7-.7L5.4 9.5" stroke="#fff" stroke-width="1.3" fill="none"/><path d="M6.9 3.6l8 3.6c.5.5.3 1.2-.2 1.6L7.8 14c-.8.4-1.5 0-1.7-.7L4.7 8.5" stroke="#ACA899" stroke-width="1.5" fill="none"/></svg></div>
<div class="tb" style="left:700px;top:183px"><svg width="23" height="21"><path d="M6 7.6h10" stroke="#C0C000" stroke-width="1.5"/><path d="M6.2 7.6l.8 7.4c4 0 7-3 9-7.4" stroke="#F0F000" stroke-width="1.5" fill="none"/><path d="M6 7.2h10" stroke="#000" stroke-width=".7"/><g shape-rendering="crispEdges" fill="#000"><rect x="5" y="6.6" width="2" height="2"/><rect x="15" y="6.6" width="2" height="2"/></g></svg></div>
<div class="tb" style="left:654px;top:204px"><svg width="23" height="21"><path d="M6.3 8.4l1.3 7.4c.3.6 1 .5 1.5.2L17.7 8.4" stroke="#fff" stroke-width="1.3" fill="none"/><path d="M5.3 7.4l1.3 7.4c.3.6 1 .5 1.5.2L16.7 7.4" stroke="#ACA899" stroke-width="1.6" fill="none"/></svg></div>
<div class="tb" style="left:677px;top:204px"><svg width="23" height="21"><path d="M10.5 4v13M4 10.5h13" stroke="#000" stroke-width="1.2" stroke-dasharray="3 1.2 4.6 1.2 3"/><path d="M10.5 3.5l-2.7 3h5.4zM10.5 17.5l-2.7-3h5.4zM3.5 10.5l3-2.7v5.4zM17.5 10.5l-3-2.7v5.4z" fill="#000"/></svg></div>
<div class="tb" style="left:700px;top:204px"><svg width="23" height="21"><g shape-rendering="crispEdges" fill="#000"><rect x="6" y="5" width="10" height="1"/><rect x="8" y="9" width="8" height="1"/><rect x="6" y="12" width="10" height="1"/><rect x="6" y="15" width="10" height="1"/></g><path d="M2.5 8l1.5 1.7 3-3" stroke="#E01020" stroke-width="1.3" fill="none"/></svg></div>
<div class="tb" style="left:654px;top:225px"><svg width="23" height="21"><text x="2.5" y="10" font-family="Liberation Serif" font-weight="bold" font-size="9" fill="#000">1</text><path d="M16.5 4.5L9.5 11.5" stroke="#000" stroke-width="3.6"/><path d="M16 5L10 11" stroke="#F8F020" stroke-width="2"/><path d="M17.6 3.4l-1.8 1.8" stroke="#E03020" stroke-width="3"/><path d="M10 11l-2.2 2.4" stroke="#000" stroke-width="2.4"/><rect x="5" y="15" width="11" height="1" fill="#000" shape-rendering="crispEdges"/></svg></div>
<div class="tb p" style="left:677px;top:225px"><svg width="23" height="21"><rect x="1" y="1" width="21" height="19" fill="url(#dith)"/><path d="M18.5 6L15 10.5" stroke="#000" stroke-width="2.2" stroke-linecap="round"/><path d="M15.5 10L10.5 14.5" stroke="#000" stroke-width="5"/><path d="M15 10.3L10.8 14" stroke="#8C8C60" stroke-width="3"/><path d="M12.5 10.5l2 .5" stroke="#C8C830" stroke-width="1.2"/><path d="M10.5 14.5l-5 2.5 1 1.3 5-1.3z" fill="#F8F020"/></svg></div>
<div class="tb" style="left:700px;top:225px"><svg width="23" height="21"><g shape-rendering="crispEdges" fill="#000"><rect x="4" y="4" width="1" height="14"/><rect x="3" y="16" width="16" height="1"/><rect x="6" y="4" width="5" height="1"/><rect x="6" y="4" width="1" height="2"/><rect x="10" y="4" width="1" height="2"/></g><path d="M5.5 15.5l2-2 2-4.5 2 4.5 1 2z" fill="#20E820"/><path d="M11.5 15.5l1.5-2.5 1.5-9.5 1.5 9.5 2.5 2.5z" fill="#008000"/></svg></div>
<div class="hsep" style="left:651px;top:259px;width:75px"></div>
<div class="a" style="left:4px;top:581px;width:722px;height:2px;background:#fff"></div>
<div class="sp" style="left:5px;top:585px;width:180px"></div>
<div class="sp" style="left:187px;top:585px;width:106px"></div>
<div class="sp" style="left:295px;top:585px;width:156px"></div>
<div class="sp" style="left:452px;top:585px;width:126px"><span id="s1">Name: Group1 (108)</span></div>
<div class="sp" style="left:580px;top:585px;width:126px"><span id="s2">SF: 1.000 Px&nbsp; Default</span></div>
<svg class="a" style="left:708px;top:585px" width="16" height="16"><path d="M14 3L3 14M14 7L7 14M14 11L11 14" stroke="#B8B4A2" stroke-width="1.4"/><path d="M15 3L3 15M15 7L7 15M15 11L11 15" stroke="#fff" stroke-width="1" transform="translate(-2,-2)" opacity=".0"/></svg>
</div>
</div>
</body></html>
